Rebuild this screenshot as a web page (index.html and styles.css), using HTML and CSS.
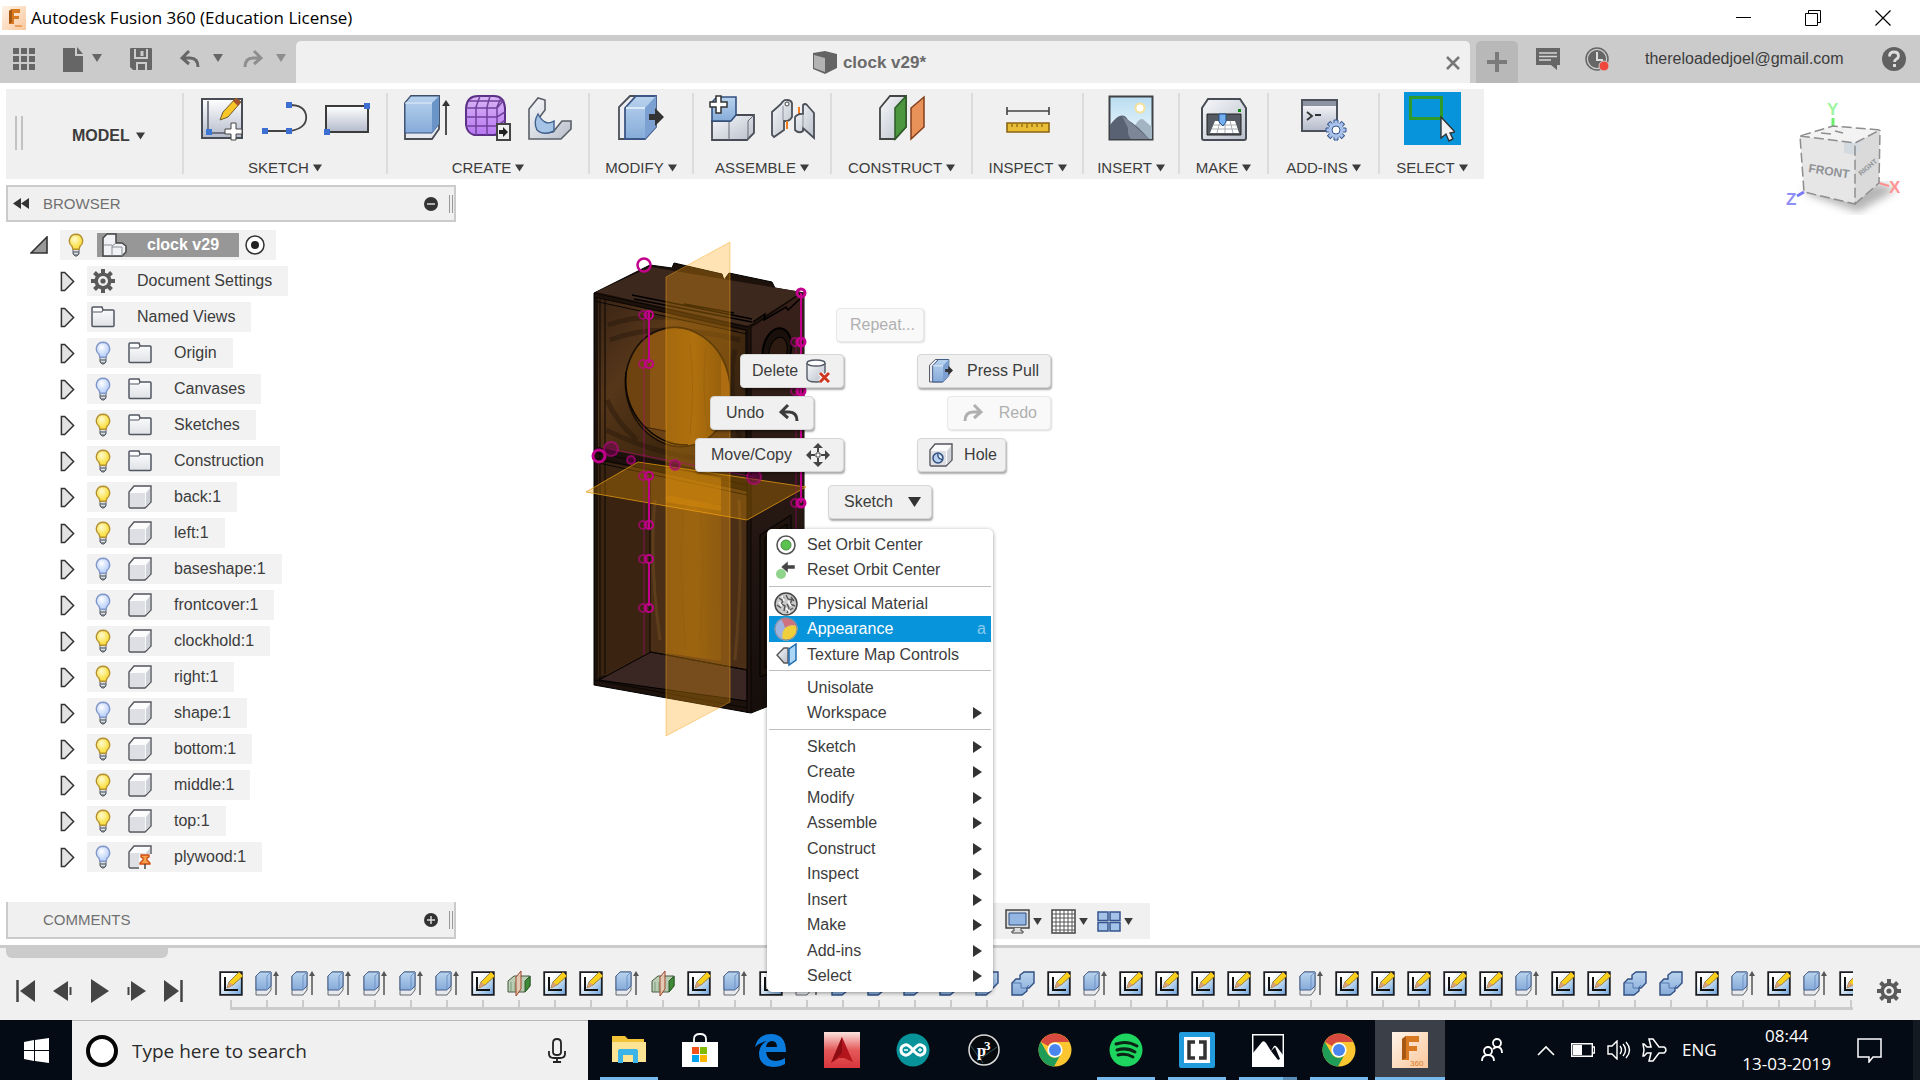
FILE: index.html
```html
<!DOCTYPE html>
<html lang="en">
<head>
<meta charset="utf-8">
<title>Autodesk Fusion 360 (Education License)</title>
<link rel="stylesheet" href="styles.css">
</head>
<body>
<svg class="sprite" width="0" height="0" aria-hidden="true">
  <defs>
    <linearGradient id="g-grey" x1="0" y1="0" x2="0" y2="1"><stop offset="0" stop-color="#fff"/><stop offset="1" stop-color="#b4bacb"/></linearGradient>
    <linearGradient id="g-steel" x1="0" y1="0" x2="1" y2="1"><stop offset="0" stop-color="#f7f8fa"/><stop offset="1" stop-color="#b9bfcb"/></linearGradient>
    <linearGradient id="g-folder" x1="0" y1="0" x2="0" y2="1"><stop offset="0" stop-color="#fff"/><stop offset="1" stop-color="#dfe1e6"/></linearGradient>
    <linearGradient id="g-blue" x1="0" y1="0" x2="0" y2="1"><stop offset="0" stop-color="#b9d3ee"/><stop offset="1" stop-color="#86abd9"/></linearGradient>
    <linearGradient id="g-sketch" x1="0" y1="0" x2="1" y2="1"><stop offset=".3" stop-color="#fff"/><stop offset="1" stop-color="#6ba4dc"/></linearGradient>
    <linearGradient id="g-purple" x1="0" y1="0" x2="0" y2="1"><stop offset="0" stop-color="#d9b5f5"/><stop offset="1" stop-color="#b877f2"/></linearGradient>
    <linearGradient id="g-sky" x1="0" y1="0" x2="0" y2="1"><stop offset="0" stop-color="#b9dcf0"/><stop offset="1" stop-color="#eefaff"/></linearGradient>
    <linearGradient id="g-f" x1="0" y1="0" x2="1" y2="1"><stop offset="0" stop-color="#fff3e8"/><stop offset="1" stop-color="#f9c79c"/></linearGradient>
    <linearGradient id="g-red" x1="0" y1="0" x2="0" y2="1"><stop offset="0" stop-color="#fbe3de"/><stop offset=".5" stop-color="#e4595a"/><stop offset="1" stop-color="#d8363d"/></linearGradient>
    <radialGradient id="g-on" cx=".4" cy=".35"><stop offset="0" stop-color="#fffbd0"/><stop offset="1" stop-color="#fbe24e"/></radialGradient>
    <radialGradient id="g-off" cx=".4" cy=".35"><stop offset="0" stop-color="#fff"/><stop offset="1" stop-color="#c3d6fb"/></radialGradient>
  </defs>
  <symbol id="caret" viewBox="0 0 10 8"><path d="M0 0h10L5 8z" fill="currentColor"/></symbol>
  <symbol id="gear" viewBox="0 0 24 24"><g fill="#5a5a5a"><path d="M10 0h4v24h-4zM0 10h24v4H0z"/><path d="M10 0h4v24h-4zM0 10h24v4H0z" transform="rotate(45 12 12)"/><circle cx="12" cy="12" r="8.600"/></g><circle cx="12" cy="12" r="5" fill="#f1f1f1"/><circle cx="12" cy="12" r="2.600" fill="#5a5a5a"/></symbol>
  <symbol id="folder" viewBox="0 0 24 24"><path d="M1 20.500V3q0-1 1-1h9l1 3h10q1 0 1 1v14.500q0 1-1 1H2q-1 0-1-1z" fill="url(#g-folder)" stroke="#515762" stroke-width="1.500"/><path d="M2 7h9l1-2" fill="none" stroke="#515762"/></symbol>
  <symbol id="box" viewBox="0 0 24 24"><path d="M1 22V7l5-6h17v16l-6 6H2z" fill="#fbfbfc" stroke="#53565c" stroke-width="1.400"/><path d="M2 8h15v14H2z" fill="#dddfe5"/><path d="M18 8l4-5v14l-4 4z" fill="#cfd1d9"/></symbol>
  <symbol id="pinned" viewBox="0 0 24 24"><use href="#box"/><path d="M11 9h13v15H11z" fill="#f5f5f6"/><path d="M13 10h8v2l-2 1v2l3 3v1H12v-1l3-3v-2l-2-1z" fill="#f5a04b" stroke="#cf4a12" stroke-width="1.300"/><path d="M17 19v5" stroke="#444" stroke-width="1.500"/></symbol>
  <symbol id="bulb-on" viewBox="0 0 16 24"><path d="M5 15h6v6l-2 2H7l-2-2z" fill="#8e949c" stroke="#555b63"/><path d="M8 1.200a6.700 6.700 0 0 1 4 12l-1 3H5l-1-3a6.700 6.700 0 0 1 4-12z" fill="url(#g-on)" stroke="#b5902e" stroke-width="1.400"/><path d="M5.500 17.500h5M6 20.500h4" stroke="#dde0e5"/></symbol>
  <symbol id="bulb-off" viewBox="0 0 16 24"><path d="M5 15h6v6l-2 2H7l-2-2z" fill="#8e949c" stroke="#555b63"/><path d="M8 1.200a6.700 6.700 0 0 1 4 12l-1 3H5l-1-3a6.700 6.700 0 0 1 4-12z" fill="url(#g-off)" stroke="#7f96c9" stroke-width="1.400"/><path d="M5.500 17.500h5M6 20.500h4" stroke="#dde0e5"/></symbol>
  <symbol id="expand" viewBox="0 0 16 22"><path d="M1.500 1.500h3.500l9.500 9.500L5 20.500H1.500z" fill="#e3e3e3" stroke="#333" stroke-width="1.600"/></symbol>
  <symbol id="t-S" viewBox="0 0 24 25"><path d="M1.200 1.200h21.600v22.600H1.200z" fill="url(#g-sketch)" stroke="#1b1d22" stroke-width="1.800"/><path d="M6 6v13h13" fill="none" stroke="#111" stroke-width="2"/><path d="M8 17l2-6L20 1l4 4-10 9z" fill="#f7cf1d" stroke="#7d5a12" stroke-width=".7"/><path d="M8 17l2-6 4 3z" fill="#d8a07a"/></symbol>
  <symbol id="t-E" viewBox="0 0 24 25"><path d="M1 20V5l4-4h11v18l-4 5H1z" fill="#e8e9ec" stroke="#62666f"/><path d="M1 19V5l4-4h11v14l-4 4z" fill="url(#g-blue)" stroke="#42618f"/><path d="M12 19V5l4-4" fill="none" stroke="#6d93c5"/><path d="M21 24V4" stroke="#555" stroke-width="1.500"/><path d="M18 5l3-5 3 5z" fill="#555"/></symbol>
  <symbol id="t-P" viewBox="0 0 24 25"><path d="M1 21V10l6-5h16v10l-5 6z" fill="#b9cdb4" stroke="#44593f"/><path d="M18 10l5-5v10l-5 6z" fill="#3f8a37" stroke="#2d5b28"/><path d="M4 11v9M8 11v9" stroke="#7f9a7a"/><path d="M9 25V6l5-6v18z" fill="#e8c8b4" fill-opacity=".85" stroke="#a0472a"/></symbol>
  <symbol id="t-J" viewBox="0 0 24 25"><path d="M1 23V12l4-4h4V4l4-3h10v11l-5 5h-2v3l-5 4H1z" fill="url(#g-blue)" stroke="#2f4d80" stroke-width="1.400"/><path d="M2 12h8v5h5l3-3" fill="none" stroke="#5279b0"/></symbol>
  <symbol id="undo" viewBox="0 0 20 20"><path d="M2 9h8q8 0 8 9M9 2L2 9l7 6" fill="none" stroke="currentColor" stroke-width="3"/></symbol>
  <symbol id="redo" viewBox="0 0 20 20"><path d="M18 9h-8q-8 0-8 9M11 2l7 7-7 6" fill="none" stroke="currentColor" stroke-width="3"/></symbol>
  <symbol id="presspull" viewBox="0 0 46 46"><path d="M1 44V12L12 1h24v31L25 44z" fill="#eceef1" stroke="#4b4f58" stroke-width="1.800"/><path d="M7 44V13L18 1h20v31L27 44z" fill="url(#g-blue)" stroke="#3c5685" stroke-width="1.800"/><path d="M27 13L38 1v31L27 44z" fill="#7ba0d1"/><path d="M8 13h19" stroke="#dce9f7" stroke-width="2"/><path d="M31 19h6v-6l9 9-9 9v-6h-6z" fill="#333"/></symbol>
  <symbol id="chrome" viewBox="0 0 34 34"><circle cx="17" cy="17" r="16.500" fill="#fbc62f"/><path d="M2.700 8.800A16.500 16.500 0 0 1 31.300 9H17a8 8 0 0 0-7 4z" fill="#d84a3f"/><path d="M2.700 8.800A16.500 16.500 0 0 0 16 33.500l6-11a8 8 0 0 1-12-1z" fill="#1f9d58"/><circle cx="17" cy="17" r="7.600" fill="#fff"/><circle cx="17" cy="17" r="6" fill="#4a86ee"/></symbol>
</svg>

<header class="titlebar">
  <svg class="app-logo" width="24" height="24" viewBox="0 0 24 24"><path d="M0 0h24v24H0z" fill="url(#g-f)"/><path d="M7 18V5l3-2h8v4h-6v3h5v3h-5v5z" fill="#d97a22"/><path d="M7 18V5l3-2v13z" fill="#a65813"/><path d="M13 20h7" stroke="#e8a25e" stroke-width="2"/></svg>
  <h1>Autodesk Fusion 360 (Education License)</h1>
  <div class="window-buttons">
    <button aria-label="Minimize"><svg width="15" height="15"><path d="M0 7.500h15" stroke="#000"/></svg></button>
    <button aria-label="Restore"><svg width="16" height="16" fill="none" stroke="#000"><path d="M.5 3.500h12v12H.5zM3.500 3.500v-3h12v12h-3"/></svg></button>
    <button aria-label="Close"><svg width="16" height="16"><path d="M.5.5l15 15M15.500.5l-15 15" stroke="#000" stroke-width="1.200"/></svg></button>
  </div>
</header>

<nav class="tabbar">
  <div class="quick">
    <button aria-label="Data panel"><svg width="22" height="22" viewBox="0 0 22 22" fill="#666"><path d="M0 0h6v6H0zM8 0h6v6H8zM16 0h6v6h-6zM0 8h6v6H0zM8 8h6v6H8zM16 8h6v6h-6zM0 16h6v6H0zM8 16h6v6H8zM16 16h6v6h-6z"/></svg></button>
    <button class="file-btn" aria-label="File"><svg width="20" height="25" viewBox="0 0 20 25" fill="#666"><path d="M0 1h12v8h8v16H0z"/><path d="M14 0l6 7h-6z"/></svg><svg class="tri" width="10" height="8"><use href="#caret"/></svg></button>
    <button class="save-btn" aria-label="Save"><svg width="22" height="22" viewBox="0 0 22 22"><path d="M0 1q0-1 1-1h20q1 0 1 1v20q0 1-1 1H3l-3-3z" fill="#666"/><path d="M5 1v9h12V1M7 22v-7h9v7" fill="none" stroke="#cbcbcb" stroke-width="2"/><path d="M12 3v5" stroke="#cbcbcb" stroke-width="3"/></svg></button>
    <button class="undo-btn" aria-label="Undo"><svg width="20" height="20"><use href="#undo"/></svg><svg class="tri" width="10" height="8"><use href="#caret"/></svg></button>
    <button class="redo-btn" aria-label="Redo"><svg width="20" height="20"><use href="#redo"/></svg><svg class="tri" width="10" height="8"><use href="#caret"/></svg></button>
  </div>
  <div class="doc-tab">
    <svg width="24" height="24" viewBox="0 0 24 24"><path d="M0 2l12-2 12 3v14l-12 6-12-5z" fill="#646464"/><path d="M1 4l11 3v14L1 17z" fill="#b3b3b3"/></svg>
    <span>clock v29*</span>
    <button aria-label="Close tab"><svg width="14" height="14"><path d="M1 1l12 12M13 1L1 13" stroke="#777" stroke-width="2.500"/></svg></button>
  </div>
  <button class="new-tab" aria-label="New tab"><svg width="20" height="20"><path d="M10 0v20M0 10h20" stroke="#7b7b7b" stroke-width="4"/></svg></button>
  <div class="account">
    <svg width="24" height="22" viewBox="0 0 24 22"><path d="M0 0h24v17h-3v5l-6-5H0z" fill="#666"/><path d="M3 5h18M3 8.500h18M3 12h12" stroke="#d5d5d5" stroke-width="1.500"/></svg>
    <svg width="25" height="25" viewBox="0 0 25 25"><circle cx="12" cy="12" r="11" fill="#cbcbcb" stroke="#666" stroke-width="1.500"/><circle cx="12" cy="12" r="9" fill="#666"/><path d="M12 5v8h6" fill="none" stroke="#ddd" stroke-width="2"/><circle cx="19" cy="19" r="5" fill="#f0473c" stroke="#cbcbcb"/></svg>
    <a href="#account">thereloadedjoel@gmail.com</a>
    <svg width="24" height="24" viewBox="0 0 24 24"><circle cx="12" cy="12" r="12" fill="#616161"/><path d="M7.500 9.500q0-4.500 4.500-4.500t4.500 4q0 2-2.300 3.300-1.700 1-1.700 2.700" fill="none" stroke="#ddd" stroke-width="2.800"/><path d="M11 17h3v3h-3z" fill="#ddd"/></svg>
  </div>
</nav>

<section class="ribbon" aria-label="Toolbar">
  <div class="grip"></div>
  <button class="workspace">MODEL <svg width="9" height="8"><use href="#caret"/></svg></button>
  <div class="group w-sketch"><div class="tools">
    <svg width="46" height="46" viewBox="0 0 46 46"><path d="M2 4h40v39H2z" fill="url(#g-grey)" stroke="#484c55" stroke-width="2"/><path d="M8 6v32h32" fill="none" stroke="#555b68" stroke-width="1.500"/><path d="M6 34h6v6H6z" fill="#3c77d6"/><path d="M20 25l3-8L36 3l5 4-13 15z" fill="#f8c629" stroke="#6d5a2b"/><path d="M36 3l5 4-3 4-5-5z" fill="#a3542e"/><path d="M31 28h5v6h6v5h-6v6h-5v-6h-6v-5h6z" fill="#fff" stroke="#444"/></svg>
    <svg width="46" height="46" viewBox="0 0 46 46"><path d="M4 36h24q18-3 16-16Q42 10 28 10" fill="none" stroke="#444" stroke-width="1.800"/><path d="M0 33h6v6H0zM24 33h6v6h-6zM24 7h6v6h-6z" fill="#3d6fd2"/></svg>
    <svg width="46" height="46" viewBox="0 0 46 46"><path d="M2 11h42v26H2z" fill="url(#g-grey)" stroke="#3b3b3b" stroke-width="2"/><path d="M0 34h6v6H0zM40 8h6v6h-6z" fill="#3d6fd2"/></svg></div>
    <button>SKETCH <svg width="9" height="8"><use href="#caret"/></svg></button></div>
  <div class="group w-create"><div class="tools">
    <svg width="46" height="46" viewBox="0 0 46 46"><path d="M1 43V8l6-7h28v33l-7 10H1z" fill="#e7e9ee" stroke="#484c55" stroke-width="1.800"/><path d="M1 38V8l6-7h28v28l-7 9z" fill="url(#g-blue)" stroke="#33507f"/><path d="M28 8l7-7v28l-7 9z" fill="#6a94c8"/><path d="M1 8h27" stroke="#e5effa"/><path d="M42 40V8" stroke="#3b3b3b" stroke-width="1.800"/><path d="M38 11l4-6 4 6z" fill="#333"/></svg>
    <svg width="46" height="46" viewBox="0 0 46 46"><path d="M1 13Q2 1 13 1h16q10 0 11 12v14q0 8-10 13H9Q2 38 1 30z" fill="url(#g-purple)" stroke="#5b3187" stroke-width="2"/><path d="M1 13h31l7-8M1 22h31l8-5M1 31h31l8-6M11 40V12l4-11M22 40V12l3-11M32 38V12l4-9M4 6h33" fill="none" stroke="#70429c" stroke-width="1.500"/><path d="M32 29h13v16H32z" fill="#eee" stroke="#444" stroke-width="2"/><path d="M34 35h4v-3l5 5-5 5v-3h-4z" fill="#222"/></svg>
    <svg width="46" height="46" viewBox="0 0 46 46"><path d="M2 44V14L11 3l7 2v10l-6 8v7l7 8 7-1 9-11h9v8L34 44z" fill="url(#g-steel)" stroke="#5b5f67" stroke-width="1.600"/><path d="M11 19q-5 8-1 16 6 6 17 1V26q-9 6-16-7z" fill="#a5c4e6" stroke="#41608e" stroke-width="1.400"/></svg></div>
    <button>CREATE <svg width="9" height="8"><use href="#caret"/></svg></button></div>
  <div class="group w-modify"><div class="tools"><svg width="46" height="46"><use href="#presspull"/></svg></div>
    <button>MODIFY <svg width="9" height="8"><use href="#caret"/></svg></button></div>
  <div class="group w-assemble"><div class="tools">
    <svg width="46" height="46" viewBox="0 0 46 46"><path d="M3 26h18l5-6h19v18l-7 7H3z" fill="url(#g-steel)" stroke="#484c55" stroke-width="1.800"/><path d="M20 45V26M39 45V26l6-6" fill="none" stroke="#666b75"/><path d="M3 26V7l5-5h19v18l-5 6z" fill="url(#g-blue)" stroke="#33507f" stroke-width="1.600"/><path d="M7 1h5v6h6v5h-6v6H7v-6H1V7h6z" fill="#fff" stroke="#333" stroke-width="1.500"/></svg>
    <svg width="46" height="46" viewBox="0 0 46 46"><path d="M3 40V17L12 9q3-5 6-4 4 0 5 3v14q-3 5-8 4v9L5 42z" fill="url(#g-steel)" stroke="#4b4f58" stroke-width="1.800"/><path d="M14 11v14" stroke="#8b909b"/><circle cx="18" cy="9" r="2" fill="#fff" stroke="#444"/><path d="M18 26v8M30 12v10" stroke="#f47a1c" stroke-width="2"/><path d="M26 35V22q3-4 8-3v-9q2-2 4 0l7 8v25L34 33v3q-4 3-8-1z" fill="url(#g-steel)" stroke="#4b4f58" stroke-width="1.800"/><path d="M34 19v14" stroke="#8b909b"/></svg></div>
    <button>ASSEMBLE <svg width="9" height="8"><use href="#caret"/></svg></button></div>
  <div class="group w-construct"><div class="tools"><svg width="46" height="46" viewBox="0 0 46 46"><path d="M1 44V13L11 1h16v31L16 44z" fill="url(#g-steel)" stroke="#444" stroke-width="1.800"/><path d="M16 13L27 1v31L16 44z" fill="#4b963e" stroke="#2c5b27" stroke-width="1.500"/><path d="M32 44V13L45 2v30z" fill="#e89259" stroke="#843f1a" stroke-width="1.500"/></svg></div>
    <button>CONSTRUCT <svg width="9" height="8"><use href="#caret"/></svg></button></div>
  <div class="group w-inspect"><div class="tools"><svg width="46" height="46" viewBox="0 0 46 46"><path d="M2 12v8M44 12v8M2 16h42" stroke="#444" stroke-width="1.600"/><path d="M2 28h42v9H2z" fill="#e9bd35" stroke="#8c6412" stroke-width="1.600"/><path d="M7 29v3M12 29v3M17 29v3M22 29v4M27 29v3M32 29v3M37 29v3" stroke="#72500a"/></svg></div>
    <button>INSPECT <svg width="9" height="8"><use href="#caret"/></svg></button></div>
  <div class="group w-insert"><div class="tools"><svg width="46" height="46" viewBox="0 0 46 46"><path d="M1.500 1.500h43v43h-43z" fill="url(#g-sky)" stroke="#3f4247" stroke-width="2"/><circle cx="32" cy="13" r="4.500" fill="#fff" stroke="#f6e09a" stroke-width="2"/><path d="M20 40l10-14q4-4 7 0l7 6v12z" fill="#a3b5c3"/><path d="M2 30q12-16 18-5 10 6 21 19H2z" fill="#596273"/><path d="M14 21l6 4 21 19H23q-4-4-3-11z" fill="#7d8696"/></svg></div>
    <button>INSERT <svg width="9" height="8"><use href="#caret"/></svg></button></div>
  <div class="group w-make"><div class="tools"><svg width="46" height="46" viewBox="0 0 46 46"><path d="M1 43V13l6-9h32l6 9v30q0 2-2 2H3q-2 0-2-2z" fill="url(#g-steel)" stroke="#484c55" stroke-width="2"/><path d="M6 19h34v21H6z" fill="#555a63" stroke="#222"/><path d="M14 26h20l4 12H9z" fill="#fff"/><path d="M12 30h23M11 34h26M19 26l-3 12M24 26v12M29 26l3 12" stroke="#a9adb5"/><path d="M18 19h7v8l-3 4-4-4z" fill="#74aef0" stroke="#23518d"/><path d="M37 14h3v3h-3z" fill="#128a12"/></svg></div>
    <button>MAKE <svg width="9" height="8"><use href="#caret"/></svg></button></div>
  <div class="group w-addins"><div class="tools"><svg width="46" height="46" viewBox="0 0 46 46"><path d="M1 5h35v31H1z" fill="url(#g-grey)" stroke="#4d525c" stroke-width="2"/><path d="M2 6h33v5H2z" fill="#8c93a3"/><path d="M6 17l5 4-5 4M14 20h6" fill="none" stroke="#333" stroke-width="1.800"/><g fill="#a9c2ea" stroke="#34558f"><path d="M33 25h4v20h-4zM25 33h20v4H25z"/><path d="M33 25h4v20h-4zM25 33h20v4H25z" transform="rotate(45 35 35)"/><circle cx="35" cy="35" r="7.500" stroke="none"/></g><circle cx="35" cy="35" r="4" fill="#fff" stroke="#34558f"/></svg></div>
    <button>ADD-INS <svg width="9" height="8"><use href="#caret"/></svg></button></div>
  <div class="group w-select"><div class="tools active"><svg width="46" height="46" viewBox="0 0 46 46"><path d="M1.500 1.500h31v21h-31z" fill="none" stroke="#2f9a2c" stroke-width="3"/><path d="M32 21v21l5-4 3 7 4-2-3-6 5-1z" fill="#f1f1f4" stroke="#333" stroke-width="1.400"/></svg></div>
    <button>SELECT <svg width="9" height="8"><use href="#caret"/></svg></button></div>
</section>

<main class="viewport">
  <aside class="side">
    <div class="panel-head">
      <svg width="16" height="11"><path d="M8 0v11L0 5.500zM16 0v11L8 5.500z" fill="#333"/></svg>
      <h2>BROWSER</h2>
      <button aria-label="Collapse"><svg width="14" height="14"><circle cx="7" cy="7" r="7" fill="#333"/><path d="M3 7h8" stroke="#ddd" stroke-width="1.500"/></svg></button>
      <span class="edge"></span>
    </div>
    <ul class="tree" id="tree">
      <li class="root">
        <svg class="open" width="18" height="18"><path d="M1 17L17 1v16z" fill="#999" stroke="#333" stroke-width="1.600"/></svg>
        <span class="row"><svg width="16" height="24"><use href="#bulb-on"/></svg>
          <span class="chosen"><svg width="25" height="24" viewBox="0 0 25 24"><path d="M1 23V5l4-4h9v9h6l4 3v6l-4 4z" fill="#f1f2f5" stroke="#444" stroke-width="1.500"/><path d="M10 23V13l4-3M2 12h8M10 14h10v9" fill="none" stroke="#8a8d94"/></svg><b>clock v29</b></span>
          <svg width="20" height="20"><circle cx="10" cy="10" r="9" fill="#fff" stroke="#333" stroke-width="1.500"/><circle cx="10" cy="10" r="4" fill="#222"/></svg></span>
      </li>
    </ul>
    <div class="panel-head comments">
      <h2>COMMENTS</h2>
      <button aria-label="Add comment"><svg width="14" height="14"><circle cx="7" cy="7" r="7" fill="#333"/><path d="M3 7h8M7 3v8" stroke="#ddd" stroke-width="1.500"/></svg></button>
      <span class="edge"></span>
    </div>
  </aside>

  <svg class="model" width="240" height="520" viewBox="580 230 240 520" role="img" aria-label="Clock model">
    <defs>
      <linearGradient id="w1" x1="0" y1="0" x2="1" y2="1"><stop offset="0" stop-color="#3a2415"/><stop offset=".3" stop-color="#553619"/><stop offset=".6" stop-color="#40280f"/><stop offset="1" stop-color="#2f1f17"/></linearGradient>
      <linearGradient id="w2" x1="0" y1="0" x2="0" y2="1"><stop offset="0" stop-color="#38211a"/><stop offset="1" stop-color="#150e0b"/></linearGradient>
      <linearGradient id="w3" x1="0" y1="0" x2="1" y2="0"><stop offset="0" stop-color="#7c4f0e"/><stop offset=".5" stop-color="#8c5a0e"/><stop offset="1" stop-color="#6b430c"/></linearGradient>
      <clipPath id="face"><ellipse cx="678" cy="387" rx="51" ry="59" transform="rotate(-14 678 387)"/></clipPath>
    </defs>
    <path d="M594 293L650 265l22 3 2-5 48 11 2 6 5-7 43 9 3 6 29 5v399l-53 21-157-28z" fill="#1c110b" stroke="#000"/>
    <path d="M596 292l54-25 152 25-54 34z" fill="#3d281d"/>
    <path d="M598 298l147 33v148l-147-32z" fill="url(#w1)"/>
    <path d="M610 340q50-20 130 0M608 325q50-18 130 5M607 400q8 20 30 40M735 350q-8 30 5 90M606 430q60 30 130 32" fill="none" stroke="#1d1009" stroke-opacity=".35" stroke-width="5"/>
    <path d="M598 461l147 30v208l-147-25z" fill="#3b2413"/>
    <path d="M598 461l52 9v182l-52 26z" fill="#3a2411"/>
    <path d="M650 470l97 21v178l-97-17z" fill="#4a2f16"/>
    <path d="M655 500q-6 60 5 140M739 500q4 70-4 160" fill="none" stroke="#6b4722" stroke-opacity=".6" stroke-width="3"/>
    <path d="M599 680l52-28 96 18v31z" fill="#3a2723" stroke="#000"/>
    <path d="M751 328l53-36v398l-53 21z" fill="url(#w2)"/>
    <path d="M594 293l153 34 10-4 44-30M594 297l153 33v383M594 301l153 33M605 299v375M600 299v380M751 327v386M594 452l153 33M594 458l153 33M594 462l153 33M594 680l153 28M650 470v182l97 18" fill="none" stroke="#0a0604"/>
    <path d="M632 295l120 24M634 299l118 23M684 304l50 9M753 322l12-8-1 6 22-13 2 3 14-13" fill="none" stroke="#000" stroke-width="1.500"/>
    <g clip-path="url(#face)">
      <path d="M610 310h130v150H610z" fill="#8a5512"/>
      <path d="M610 310h40v118l-40-10z" fill="#6f430f"/>
      <path d="M640 426l90 18v20h-100z" fill="#6b4213" stroke="#402509"/>
      <path d="M666 310h55v150h-55z" fill="url(#w3)"/>
    </g>
    <ellipse cx="678" cy="387" rx="52" ry="60" transform="rotate(-14 678 387)" fill="none" stroke="#1a0f06" stroke-width="1.600"/>
    <path d="M626 372q-3 30 16 52 20 22 46 21" fill="none" stroke="#0a0604" stroke-width="1.500"/>
    <ellipse cx="777" cy="350" rx="14" ry="22" transform="rotate(12 777 350)" fill="#1a100b" stroke="#000" stroke-width="2"/>
    <ellipse cx="778" cy="352" rx="9" ry="15" transform="rotate(12 778 352)" fill="#2d1b12" stroke="#000"/>
    <path d="M760 535l31-20v150l-31 12zM765 538l22-14v134l-22 10z" fill="#1d120c" stroke="#000"/>
    <path d="M666 495l55 11v155l-55-8z" fill="url(#w3)" fill-opacity=".6"/>
    <path d="M690 345q5 40 0 90M706 348q-5 40 2 84M684 500q-6 70 2 150M700 500q6 60 0 140M711 490q4 60 0 160" fill="none" stroke="#5c390b" stroke-opacity=".45"/>
    <path d="M586 492l52-30 168 25-59 33z" fill="#e89600" fill-opacity=".3" stroke="#eb9d12" stroke-opacity=".75"/>
    <path d="M666 467l55 11v33l-55-9z" fill="#c07d0c" fill-opacity=".5"/>
    <path d="M666 277l64-35v460l-64 34z" fill="#ffa610" fill-opacity=".31" stroke="#f5a623" stroke-opacity=".45"/>
    <g fill="none" stroke="#c3008b">
      <path d="M649 310v53M649 478v50M649 562v44M801 293v210" stroke-width="2"/>
      <path d="M644 310v345M610 449l144 28M796 340v210" stroke-opacity=".5"/>
      <circle cx="644" cy="265" r="6.500" stroke-width="2.500"/><circle cx="599" cy="456" r="6" stroke-width="3"/>
      <g stroke-width="2"><circle cx="649" cy="315" r="4"/><circle cx="649" cy="364" r="4"/><circle cx="649" cy="476" r="4"/><circle cx="649" cy="525" r="4"/><circle cx="649" cy="559" r="4"/><circle cx="649" cy="608" r="4"/></g>
      <g stroke-opacity=".6" stroke-width="2"><circle cx="643" cy="315" r="4"/><circle cx="643" cy="364" r="4"/><circle cx="643" cy="476" r="4"/><circle cx="643" cy="525" r="4"/><circle cx="643" cy="559" r="4"/><circle cx="643" cy="608" r="4"/><circle cx="795" cy="342" r="4"/><circle cx="795" cy="391" r="4"/><circle cx="795" cy="503" r="4"/></g>
      <g stroke-width="3"><circle cx="801" cy="293" r="4"/><circle cx="801" cy="342" r="4"/><circle cx="801" cy="391" r="4"/><circle cx="801" cy="503" r="4"/></g>
      <g fill="#7c0058" fill-opacity=".5" stroke-opacity=".6" stroke-width="2"><circle cx="611" cy="449" r="7"/><circle cx="631" cy="460" r="4"/><circle cx="675" cy="465" r="5"/><circle cx="754" cy="477" r="7"/></g>
    </g>
  </svg>

  <svg class="viewcube" width="120" height="120" viewBox="1780 98 120 120" role="img" aria-label="View cube">
    <defs><filter id="soft"><feGaussianBlur stdDeviation="4"/></filter></defs>
    <path d="M1808 194l50 18 38-22-12-6-80 4z" fill="#777" fill-opacity=".55" filter="url(#soft)"/>
    <path d="M1833 126v-8" stroke="#6bf06b" stroke-width="3"/><path d="M1879 183l10 3" stroke="#ff8f8f" stroke-width="2"/><path d="M1804 192l-7 4" stroke="#7a7af5" stroke-width="3"/>
    <path d="M1800 136l55 7v61l-51-12z" fill="#e6e6e6"/><path d="M1855 143l25-13-1 53-24 21z" fill="#dadada"/><path d="M1800 136l33-10 47 4-25 13z" fill="#f3f3f3"/>
    <path d="M1844 141l11 2 5-3v12l-5 3-11-2z" fill="#d3dae0"/>
    <path d="M1800 136l55 7 25-13-47-4-33 10 4 56 51 12v-61M1855 204l24-21 1-53M1821 133l10 1M1835 131l8 2" fill="none" stroke="#8e8e8e" stroke-width="1.500" stroke-dasharray="10 4"/>
    <text x="1808" y="172" class="cube-face" transform="rotate(9 1808 172)">FRONT</text>
    <text x="1861" y="176" class="cube-side" transform="rotate(-40 1861 176)">RIGHT</text>
    <text x="1827" y="115" class="axis axis-y">Y</text><text x="1889" y="193" class="axis axis-x">X</text><text x="1786" y="205" class="axis axis-z">Z</text>
  </svg>

  <div class="viewbar">
    <button aria-label="Display settings"><svg width="25" height="25" viewBox="0 0 25 25"><path d="M1 1h23v18H1z" fill="#ddd" stroke="#444" stroke-width="1.500"/><path d="M4 4h17v12H4z" fill="#93b6e2" stroke="#2f4d80"/><path d="M9 19v3H7v2h11v-2h-2v-3" fill="#ddd" stroke="#444"/></svg><svg width="9" height="7"><use href="#caret"/></svg></button>
    <button aria-label="Grid and snaps"><svg width="25" height="25" viewBox="0 0 25 25"><path d="M1 1h23v23H1z" fill="#fff" stroke="#444" stroke-width="1.500"/><path d="M5 1v23M9 1v23M13 1v23M17 1v23M21 1v23M1 5h23M1 9h23M1 13h23M1 17h23M1 21h23" stroke="#555"/></svg><svg width="9" height="7"><use href="#caret"/></svg></button>
    <button aria-label="Viewports"><svg width="24" height="21" viewBox="0 0 24 21" fill="#a5c2e8" stroke="#34558f" stroke-width="1.500"><path d="M1 1h10v8.500H1zM13 1h10v8.500H13zM1 11.500h10V20H1zM13 11.500h10V20H13z"/></svg><svg width="9" height="7"><use href="#caret"/></svg></button>
  </div>

  <div class="marking">
    <button class="m-repeat" disabled>Repeat...</button>
    <button class="m-delete">Delete <svg width="24" height="24" viewBox="0 0 24 24"><path d="M1 4v15q0 4 9 4t9-4V4" fill="url(#g-steel)" stroke="#555b66" stroke-width="1.400"/><ellipse cx="10" cy="4" rx="9" ry="3" fill="#fff" stroke="#555b66" stroke-width="1.400"/><path d="M14 14l9 9M23 14l-9 9" stroke="#fff" stroke-width="5"/><path d="M14 14l9 9M23 14l-9 9" stroke="#cf3721" stroke-width="3"/></svg></button>
    <button class="m-press"><svg width="24" height="24"><use href="#presspull"/></svg> Press Pull</button>
    <button class="m-undo">Undo <svg width="20" height="20"><use href="#undo"/></svg></button>
    <button class="m-redo" disabled><svg width="20" height="20"><use href="#redo"/></svg> Redo</button>
    <button class="m-move">Move/Copy <svg width="24" height="24" viewBox="0 0 24 24"><path d="M12 0l5 5h-4v4h-2V5H7zM12 24l5-5h-4v-4h-2v4H7zM0 12l5-5v4h4v2H5v4zM24 12l-5-5v4h-4v2h4v4z" fill="#444"/><path d="M10 10h4v4h-4z" fill="#fff" stroke="#444"/></svg></button>
    <button class="m-hole"><svg width="24" height="24" viewBox="0 0 24 24"><use href="#box"/><circle cx="9" cy="15" r="5" fill="#b8d0ef" stroke="#2f4d80" stroke-width="1.500"/><path d="M9 11a4 4 0 0 0 5 5" fill="#fff" stroke="#2f4d80" stroke-width="1.500"/></svg> Hole</button>
    <button class="m-sketch">Sketch <svg width="13" height="10" viewBox="0 0 10 8" preserveAspectRatio="none"><path d="M0 0h10L5 8z" fill="#333"/></svg></button>
  </div>

  <div class="context-menu" role="menu">
    <ul>
      <li><button><svg width="24" height="24" viewBox="0 0 24 24"><circle cx="12" cy="12" r="9" fill="#fff" stroke="#555" stroke-width="1.600"/><circle cx="12" cy="12" r="5" fill="#5cc24f" stroke="#4a8b42"/></svg>Set Orbit Center</button></li>
      <li><button><svg width="24" height="24" viewBox="0 0 24 24"><circle cx="7" cy="16" r="5" fill="#8fd48a"/><path d="M7 9l7-6v4h7v4h-7v4z" fill="#444" stroke="#fff" stroke-width=".5"/></svg>Reset Orbit Center</button></li>
    </ul>
    <ul>
      <li><button><svg width="24" height="24" viewBox="0 0 24 24"><circle cx="12" cy="12" r="11" fill="#c9c9c9" stroke="#444" stroke-width="1.500"/><path d="M5 6l4 3-2 3 4 2-1 5M12 3l2 4 4 1-2 4 5 2M13 12l2 4-2 5M3 13l4 3M17 5l3 4M16 18l3-2M10 5l-2 3" fill="none" stroke="#555" stroke-width="1.400"/><path d="M8 4l2 5M14 9l3 5M5 10l3 4M12 16l4 4" stroke="#fff" stroke-width="1.500"/></svg>Physical Material</button></li>
      <li><button class="hot"><svg width="24" height="24" viewBox="0 0 24 24"><circle cx="12" cy="12" r="11.500" fill="#9eb3de"/><path d="M7 2a11.500 11.500 0 0 1 16 7q-8-2-12 2-1-5-4-9z" fill="#cf7280"/><path d="M23 9a11.500 11.500 0 0 1-14 14q-2-7 2-12 5-4 12-2z" fill="#f0cf3c"/><circle cx="12" cy="12" r="11" fill="none" stroke="#868894"/></svg>Appearance<kbd>a</kbd></button></li>
      <li><button><svg width="24" height="24" viewBox="0 0 24 24"><path d="M3 12l7-7h4v15h-4z" fill="url(#g-steel)" stroke="#555" stroke-width="1.400"/><path d="M15 22V6l7-5v16z" fill="#acd6f5" stroke="#1f6db0" stroke-width="1.500"/></svg>Texture Map Controls</button></li>
    </ul>
    <ul>
      <li><button>Unisolate</button></li>
      <li><button class="sub">Workspace</button></li>
    </ul>
    <ul>
      <li><button class="sub">Sketch</button></li>
      <li><button class="sub">Create</button></li>
      <li><button class="sub">Modify</button></li>
      <li><button class="sub">Assemble</button></li>
      <li><button class="sub">Construct</button></li>
      <li><button class="sub">Inspect</button></li>
      <li><button class="sub">Insert</button></li>
      <li><button class="sub">Make</button></li>
      <li><button class="sub">Add-ins</button></li>
      <li><button class="sub">Select</button></li>
    </ul>
  </div>
</main>

<section class="timeline" aria-label="Timeline">
  <div class="thumb"></div>
  <div class="timeline-body">
    <div class="playback">
      <button aria-label="Go to start"><svg width="19" height="22"><path d="M1.500 0v22" stroke="#444" stroke-width="2.500"/><path d="M19 0v22L4 11z" fill="#444"/></svg></button>
      <button aria-label="Step back"><svg width="19" height="20"><path d="M15 0v20L0 10z" fill="#444"/><path d="M17.500 6v8" stroke="#444" stroke-width="2"/></svg></button>
      <button aria-label="Play"><svg width="18" height="24"><path d="M0 0v24l18-12z" fill="#444"/></svg></button>
      <button aria-label="Step forward"><svg width="19" height="20"><path d="M4 0v20l15-10z" fill="#444"/><path d="M1.500 6v8" stroke="#444" stroke-width="2"/></svg></button>
      <button aria-label="Go to end"><svg width="19" height="22"><path d="M17.500 0v22" stroke="#444" stroke-width="2.500"/><path d="M0 0v22l15-11z" fill="#444"/></svg></button>
    </div>
    <div class="track"><ol class="features" id="features"></ol><div class="rail"></div></div>
    <button class="settings" aria-label="Timeline settings"><svg width="24" height="24"><use href="#gear"/></svg></button>
  </div>
</section>

<footer class="taskbar">
  <button class="start" aria-label="Start"><svg width="25" height="25" viewBox="0 0 25 25" fill="#fff"><path d="M0 4l10-2v10H0zM11 2l14-2v12H11zM0 13h10v10L0 21zM11 13h14v12l-14-2z"/></svg></button>
  <div class="search">
    <svg width="34" height="34"><circle cx="17" cy="17" r="14" fill="#fff" stroke="#050505" stroke-width="4"/></svg>
    <input type="text" aria-label="Search" placeholder="Type here to search">
    <svg width="18" height="25" viewBox="0 0 18 25" fill="none" stroke="#222" stroke-width="1.800"><path d="M5 5q0-4 4-4t4 4v9q0 3-4 3t-4-3z"/><path d="M1 13v3q0 4 5 4h6q5 0 5-4v-3M9 20v4M5 24h8"/></svg>
  </div>
  <div class="apps">
    <button class="run" aria-label="File Explorer"><svg width="34" height="28" viewBox="0 0 34 28"><path d="M0 0h13l3 3h16v23H0z" fill="#f2c238"/><path d="M0 6h34v20H0z" fill="#fde494"/><path d="M6 27V15q0-2 2-2h16q2 0 2 2v12h-5v-8H11v8z" fill="#3cb4e7"/></svg></button>
    <button aria-label="Microsoft Store"><svg width="36" height="34" viewBox="0 0 36 34"><path d="M12 10V6q0-5 6-5t6 5v4" fill="none" stroke="#fff" stroke-width="1.800"/><path d="M0 9h36v25H0z" fill="#fff"/><path d="M10 14h7v7h-7z" fill="#f1511b"/><path d="M18 14h7v7h-7z" fill="#80b900"/><path d="M10 22h7v7h-7z" fill="#00a3ee"/><path d="M18 22h7v7h-7z" fill="#fbb700"/></svg></button>
    <button aria-label="Edge"><svg width="32" height="34" viewBox="0 0 32 34"><path d="M0 14Q3 1 16 1q15 0 15 18H11q1 9 10 9 5 0 9-3v6q-5 3-12 3Q4 33 4 20 5 11 12 8 5 9 0 14zm11 0h11q0-6-5-6t-6 6z" fill="#0a7bdc" fill-rule="evenodd"/></svg></button>
    <button aria-label="AutoCAD"><svg width="36" height="36" viewBox="0 0 36 36"><path d="M0 0h36v36H0z" fill="url(#g-red)"/><path d="M18 5l11 25-9-4h-5l-8 5z" fill="#b3151c"/><path d="M18 5v16l-11 10z" fill="#8c0d13"/></svg></button>
    <button aria-label="Arduino"><svg width="34" height="34" viewBox="0 0 34 34"><circle cx="17" cy="17" r="16.500" fill="#079399"/><path d="M17 17q-5-6-8-5-4 1-4 5t4 5q3 1 8-5t8-5q4 1 4 5t-4 5q-3 1-8-5z" fill="none" stroke="#fff" stroke-width="3"/><path d="M8 17h4M22 17h4M24 15v4" stroke="#fff" stroke-width="1.300"/></svg></button>
    <button aria-label="Processing"><svg width="32" height="32" viewBox="0 0 32 32"><circle cx="16" cy="16" r="15" fill="#070a0c" stroke="#ddd" stroke-width="1.500"/><path d="M3 12l12 17M29 13L9 27" stroke="#2f565a"/><text x="9" y="22" class="p3">p</text><text x="16" y="16" class="p3-sup">3</text></svg></button>
    <button aria-label="Chrome"><svg width="34" height="34"><use href="#chrome"/></svg></button>
    <button class="run" aria-label="Spotify"><svg width="34" height="34" viewBox="0 0 34 34"><circle cx="17" cy="17" r="16.500" fill="#1ed65f"/><path d="M7 11q11-4 21 2M8 17q10-3 18 2M9 22q8-2 15 2" fill="none" stroke="#0b2415" stroke-width="3" stroke-linecap="round"/></svg></button>
    <button class="run" aria-label="Brackets"><svg width="36" height="36" viewBox="0 0 36 36"><path d="M0 2q0-2 2-2h32q2 0 2 2v32q0 2-2 2H2q-2 0-2-2z" fill="#229bdc"/><path d="M5 5h26v26H5z" fill="#fff"/><path d="M16 10h-6v16h6M20 10h6v16h-6" fill="none" stroke="#333" stroke-width="3.500"/></svg></button>
    <button class="run stacked" aria-label="Photos"><svg width="32" height="33" viewBox="0 0 32 33"><path d="M.7.7h30.600v31.600H.7z" fill="#050a12" stroke="#fff" stroke-width="1.500"/><path d="M1 19L10 8q2-2 4 1l5 8 3-5q1-1 3 1l6 8v11H1z" fill="#fff"/><path d="M19 17l7 9 2-1-5-12" fill="#050a12"/></svg></button>
    <button class="run" aria-label="Chrome window"><svg width="34" height="34"><use href="#chrome"/></svg></button>
    <button class="run current" aria-label="Fusion 360"><svg width="36" height="36" viewBox="0 0 36 36"><path d="M0 0h36v36H0z" fill="url(#g-f)"/><path d="M10 28V7l4-3h13v6H17v4h8v5h-8v9z" fill="#d97a22"/><path d="M10 28V7l4-3v22z" fill="#a65813"/><text x="18" y="34" class="f360">360</text></svg></button>
  </div>
  <div class="tray">
    <svg class="people" width="22" height="24" viewBox="0 0 22 24" fill="none" stroke="#fff" stroke-width="1.800"><circle cx="16" cy="5" r="4"/><circle cx="7" cy="13" r="4"/><path d="M1 23q0-6 6-6t6 6M12 11q2-2 4-2 5 0 5 6"/></svg>
    <svg class="chev" width="18" height="11"><path d="M1 10l8-8 8 8" fill="none" stroke="#fff" stroke-width="1.600"/></svg>
    <svg class="batt" width="24" height="14"><path d="M.7.7h20.600v12.600H.7zM22 4h1.500v6H22" fill="none" stroke="#fff" stroke-width="1.400"/><path d="M2 2h9v10H2z" fill="#fff"/></svg>
    <svg class="vol" width="24" height="20" viewBox="0 0 24 20" fill="none" stroke="#fff" stroke-width="1.400"><path d="M1 6h4l5-5v18l-5-5H1zM13 6q3 4 0 8M16 4q5 6 0 12M19 2q7 8 0 16"/></svg>
    <svg class="plane" width="25" height="24" viewBox="0 0 25 24" fill="none" stroke="#fff" stroke-width="1.500"><path d="M9 9L7 1h4l6 8h5q2 1 2 3t-2 3h-5l-6 8H7l2-8H5l-3 3H1l1-6-1-6h1l3 3z"/></svg>
    <span class="lang">ENG</span>
    <time class="clock" datetime="2019-03-13T08:44"><span>08:44</span><span>13-03-2019</span></time>
    <svg class="note" width="25" height="25"><path d="M1 1h23v18h-8l-4 5v-5H1z" fill="none" stroke="#fff" stroke-width="1.500"/></svg>
  </div>
</footer>
<script src="script.js"></script>
</body>
</html>
```

FILE: styles.css
```css
* { box-sizing: border-box; }
body {
  margin: 0;
  min-height: 100vh;
  display: flex;
  flex-direction: column;
  overflow: hidden;
  background: #fff;
  color: #3c3c3c;
  font: 16px/20px "Liberation Sans", Arial, sans-serif;
}
button { border: 0; margin: 0; padding: 0; background: none; color: inherit; font: inherit; display: flex; align-items: center; }
ul, ol { list-style: none; margin: 0; padding: 0; }
h1, h2 { margin: 0; font-weight: 400; }
svg { display: block; flex: none; }
.sprite { position: absolute; }

.titlebar { height: 35px; display: flex; align-items: center; gap: 5px; padding: 0 2px; color: #000; }
.titlebar h1 { flex: 1; font: 17px/24px "Open Sans", sans-serif; }
.window-buttons { display: flex; }
.window-buttons button { width: 70px; height: 35px; justify-content: center; }

.tabbar { height: 48px; display: flex; align-items: flex-end; background: #cbcbcb; }
.quick { width: 296px; height: 48px; display: flex; align-items: center; padding-left: 13px; color: #666; }
.quick button { height: 24px; }
.tri { margin-bottom: 2px; }
.file-btn { margin-left: 28px; gap: 9px; }
.save-btn { margin-left: 28px; }
.undo-btn { margin-left: 28px; gap: 13px; }
.redo-btn { margin-left: 20px; gap: 13px; color: #8e8e8e; }
.doc-tab { flex: 1; height: 42px; display: flex; align-items: center; justify-content: center; gap: 6px; padding: 2px 10px 0 3px; background: #f0f0f0; border-radius: 5px 5px 0 0; color: #6a6a6a; font-weight: 700; font-size: 17px; }
.doc-tab > svg { margin-left: auto; }
.doc-tab button { margin-left: auto; }
.new-tab { width: 42px; height: 42px; margin-left: 6px; justify-content: center; background: #b8b8b8; border-radius: 5px 5px 0 0; }
.account { width: 402px; height: 48px; display: flex; align-items: center; padding: 0 14px 0 18px; }
.account svg + svg { margin-left: 25px; }
.account a { margin: 0 auto 0 35px; color: #3c3c3c; text-decoration: none; }

.ribbon { align-self: flex-start; height: 90px; margin: 6px 0 0 6px; display: flex; background: #f0f0f0; font-size: 15px; }
.grip { width: 8px; height: 34px; margin: 27px 0 0 9px; border: solid #c2c2c2; border-width: 0 2px; }
.workspace { width: 159px; padding: 3px 37px 0 49px; justify-content: space-between; font-size: 16px; font-weight: 700; }
.group { display: flex; flex-direction: column; align-items: center; border-left: 2px solid #dcdcdc; border-image: linear-gradient(transparent 5%, #dcdcdc 5%, #dcdcdc 93%, transparent 93%) 1; }
.tools { height: 62px; width: 100%; padding-top: 1px; display: flex; align-items: center; justify-content: space-evenly; }
.group button { gap: 4px; height: 34px; }
.w-sketch { width: 204px; }
.w-create { width: 202px; }
.w-modify { width: 104px; }
.w-assemble { width: 138px; }
.w-construct { width: 141px; }
.w-inspect { width: 111px; }
.w-insert { width: 96px; }
.w-make { width: 89px; }
.w-addins { width: 111px; }
.w-select { width: 106px; }
.tools.active { width: 57px; height: 57px; margin: 3px 0 2px; background: #0894da; }
.group button { padding-top: 10px; }

.viewport { position: relative; flex: 1; min-height: 0; display: flex; justify-content: space-between; padding: 6px 0 6px 6px; }
.side { width: 450px; display: flex; flex-direction: column; }
.panel-head { height: 37px; display: flex; align-items: center; background: #f0f0f0; border: 2px solid #cbcbcb; padding: 0 1px 0 5px; color: #707070; }
.panel-head h2 { font-size: 15px; line-height: 20px; margin-left: 14px; }
.panel-head button { margin-left: auto; }
.comments { margin-top: auto; border-top: 0; padding-left: 21px; }
.edge { width: 4px; height: 18px; margin-left: 11px; border: solid #999; border-width: 0 1px; }
.tree { margin-top: 8px; display: flex; flex-direction: column; gap: 6px; padding-left: 54px; }
.tree li { height: 30px; display: flex; align-items: center; gap: 12px; }
.tree .root { margin-left: -30px; }
.row { height: 30px; display: flex; align-items: center; gap: 22px; background: #f2f2f2; padding: 0 16px 0 4px; }
.row .icons { display: flex; gap: 17px; }
.row .icons svg:first-child:not(:last-child) { margin-left: 4px; }
.root .row { gap: 6px; padding: 0 11px 0 8px; }
.chosen { width: 142px; height: 24px; margin-left: 7px; display: flex; gap: 20px; padding-left: 5px; align-items: center; background: #979797; color: #fff; }

.model { position: absolute; left: 580px; top: 51px; }
.viewcube { position: absolute; right: 20px; top: -81px; }
.cube-face { font: 700 12px "Liberation Sans", sans-serif; fill: #8f9296; }
.cube-side { font: 700 7px "Liberation Sans", sans-serif; fill: #8f9296; }
.axis { font: 700 17px "Liberation Sans", sans-serif; }
.axis-y { fill: #9ff59f; }
.axis-x { fill: #ff9595; }
.axis-z { fill: #8f8ff7; }
.viewbar { position: absolute; left: 50%; bottom: 6px; width: 380px; height: 36px; transform: translateX(-50%); display: flex; align-items: center; justify-content: flex-end; gap: 9px; padding-right: 17px; background: #f0f0f0; }
.viewbar button { gap: 3px; }

.marking button { position: absolute; height: 34px; padding: 0 13px; justify-content: space-between; background: #f0f0f0; border: 1px solid #d6d6d6; border-radius: 4px; box-shadow: 1px 2px 2px #0005; white-space: pre; }
.marking button:disabled { background: #f9f9f9; border-color: #e8e8e8; color: #b0b0b0; box-shadow: 1px 1px 2px #0002; }
.marking .m-repeat { left: 836px; top: 129px; width: 88px; }
.marking .m-delete { left: 740px; top: 175px; width: 104px; padding-left: 11px; }
.marking .m-press { left: 917px; top: 175px; width: 134px; padding: 0 11px; }
.marking .m-undo { left: 710px; top: 217px; width: 104px; padding: 0 14px 0 15px; }
.marking .m-redo { left: 947px; top: 217px; width: 104px; padding: 0 13px 0 15px; }
.marking .m-move { left: 695px; top: 259px; width: 149px; padding-left: 15px; }
.marking .m-hole { left: 917px; top: 259px; width: 89px; padding: 0 8px 0 11px; }
.marking .m-sketch { left: 828px; top: 306px; width: 104px; padding: 0 10px 0 15px; }

.context-menu { position: absolute; z-index: 2; left: 767px; top: 350px; width: 226px; padding: 3px 2px; background: #fff; border-radius: 5px; box-shadow: 0 1px 4px #0006; }
.context-menu ul + ul { margin-top: 3px; padding-top: 4px; border-top: 1px solid #c0c0c0; }
.context-menu button { width: 100%; height: 25px; padding-left: 38px; }
.context-menu li:nth-child(even) button { height: 26px; }
.context-menu button svg { margin: 0 9px 0 -33px; }
.context-menu .hot { background: #0894da; color: #fff; }
.context-menu kbd { margin-left: auto; padding-right: 5px; font: inherit; color: #8ccbee; }
.sub::after { content: ""; margin: 0 9px 0 auto; border: solid transparent; border-width: 6px 0 6px 9px; border-left-color: #333; }

.timeline { height: 75px; background: #f0f0f0; border-top: 3px solid #cbcbcb; }
.thumb { width: 162px; height: 10px; margin-left: 6px; background: #cbcbcb; border-radius: 0 0 6px 6px; }
.timeline-body { display: flex; height: 62px; padding-left: 7px; }
.playback { display: flex; width: 206px; padding-bottom: 4px; }
.playback button { width: 37px; justify-content: center; padding-top: 8px; }
.track { flex: 1; min-width: 0; overflow: hidden; padding-top: 13px; }
.features { display: flex; }
.features li { flex: none; width: 36px; height: 36px; display: flex; flex-direction: column; align-items: center; gap: 4px; }
.features li::after { content: ""; width: 2px; height: 7px; background: #cbcbcb; }
.rail { height: 3px; margin-left: 17px; background: #cbcbcb; }
.settings { width: 67px; padding: 0 0 0 24px; height: 66px; }

.taskbar { height: 60px; display: flex; background: #050b14; color: #fff; font: 18px/28px "Open Sans", sans-serif; }
.start { width: 72px; justify-content: center; }
.search { width: 516px; display: flex; align-items: center; padding: 0 22px 0 13px; background: #f0f0f0; border-top: 1px solid #b8b8b8; }
.search input { flex: 1; min-width: 0; margin-left: 13px; padding: 0; border: 0; background: none; font: 19px/28px "Open Sans", sans-serif; }
.search input::placeholder { color: #2a2a2a; opacity: 1; }
.apps { display: flex; gap: 1px; padding-left: 6px; }
.apps button { width: 70px; height: 60px; justify-content: center; }
.run { background: linear-gradient(#76b9ed, #76b9ed) bottom / 58px 3px no-repeat; }
.stacked { background-image: linear-gradient(90deg, #76b9ed 76%, #5a8db5 76%); }
.current { background-size: 70px 3px; background-color: #3b4048; }
.tray { flex: 1; display: flex; align-items: center; padding-left: 36px; border-right: 7px solid #141a22; }
.chev { margin-left: 34px; }
.batt { margin-left: 16px; }
.vol { margin-left: 12px; }
.plane { margin-left: 11px; }
.lang { margin-left: 15px; font-size: 17px; }
.clock { margin-left: auto; display: flex; flex-direction: column; align-items: center; font-size: 17px; }
.note { margin: 0 31px 0 26px; }
.p3 { font: 700 16px "Liberation Serif", serif; fill: #fff; }
.p3-sup { font: 700 13px "Liberation Serif", serif; fill: #fff; }
.f360 { font: 8px "Liberation Sans", sans-serif; fill: #d97a22; }
```

FILE: script.js
```js
const svg = (id, w, h) => `<svg width="${w}" height="${h}"><use href="#${id}"/></svg>`;

const nodes = [
  ["Document Settings", "gear"], ["Named Views", "folder"],
  ["Origin", "folder", "off"], ["Canvases", "folder", "off"],
  ["Sketches", "folder", "on"], ["Construction", "folder", "on"],
  ["back:1", "box", "on"], ["left:1", "box", "on"],
  ["baseshape:1", "box", "off"], ["frontcover:1", "box", "off"],
  ["clockhold:1", "box", "on"], ["right:1", "box", "on"],
  ["shape:1", "box", "off"], ["bottom:1", "box", "on"],
  ["middle:1", "box", "on"], ["top:1", "box", "on"],
  ["plywood:1", "pinned", "off"]
];
document.getElementById("tree").insertAdjacentHTML("beforeend", nodes.map(([name, icon, bulb]) =>
  `<li>${svg("expand", 15, 21)}<span class="row"><span class="icons">${bulb ? svg("bulb-" + bulb, 16, 24) : ""}${svg(icon, 24, 24)}</span>${name}</span></li>`
).join(""));

/* S sketch, E extrude, P construction plane, J combine */
const features = "SEEEEEESPSSEPSESEJJJJJJSESSSSSESSSSSESSJJSESES";
document.getElementById("features").innerHTML =
  [...features].map(f => `<li>${svg("t-" + f, 24, 25)}</li>`).join("");
```
